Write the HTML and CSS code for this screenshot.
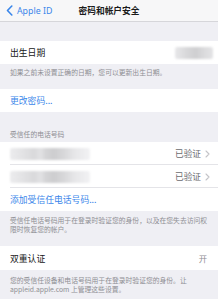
FILE: index.html
```html
<!DOCTYPE html>
<html lang="zh-CN">
<head>
<meta charset="utf-8">
<link rel="stylesheet" href="styles.css">
</head>
<body>
<div class="page">
  <header class="nav">
    <div class="back">
      <svg class="back-icon" width="7" height="11" viewBox="0 0 7 11"><path d="M5.8 1 L1.5 5.5 L5.8 10" fill="none" stroke="#3a86ea" stroke-width="1.6" stroke-linecap="round" stroke-linejoin="round"/></svg>
      <span>Apple ID</span>
    </div>
    <div class="title">密码和帐户安全</div>
    <div></div>
  </header>

  <div class="gap g1"></div>
  <div class="group">
    <div class="row">
      <span class="label">出生日期</span>
      <span class="blur blur-date"></span>
    </div>
  </div>
  <div class="note n1">如果之前未设置正确的日期，您可以更新出生日期。</div>

  <div class="group">
    <div class="row"><span class="link">更改密码...</span></div>
  </div>

  <div class="section-head">受信任的电话号码</div>
  <div class="group">
    <div class="row sep">
      <span class="blur blur-phone"></span>
      <span class="value">已验证<svg class="chev" width="5" height="8" viewBox="0 0 5 8"><path d="M1 1 L4 4 L1 7" fill="none" stroke="#c4c4c8" stroke-width="1.1" stroke-linecap="round" stroke-linejoin="round"/></svg></span>
    </div>
    <div class="row sep">
      <span class="blur blur-phone"></span>
      <span class="value">已验证<svg class="chev" width="5" height="8" viewBox="0 0 5 8"><path d="M1 1 L4 4 L1 7" fill="none" stroke="#c4c4c8" stroke-width="1.1" stroke-linecap="round" stroke-linejoin="round"/></svg></span>
    </div>
    <div class="row"><span class="link">添加受信任电话号码...</span></div>
  </div>
  <div class="note n2">受信任电话号码用于在登录时验证您的身份，以及在您失去访问权限时恢复您的帐户。</div>

  <div class="group">
    <div class="row tall">
      <span class="label">双重认证</span>
      <span class="state">开</span>
    </div>
  </div>
  <div class="note n3">您的受信任设备和电话号码用于在登录时验证您的身份。让<br>appleid.apple.com 上管理这些设置。</div>
</div>
</body>
</html>
```

FILE: styles.css
```css
html, body {
  margin: 0;
  padding: 0;
  background: #efeff4;
}
body {
  font-family: "Noto Sans CJK SC", "Noto Sans", sans-serif;
  color: #111;
}
.page {
  width: 218px;
  height: 299px;
  overflow: hidden;
  background: #efeff4;
}
.nav {
  height: 21px;
  border-bottom: 1px solid #d6d6da;
  background: #f7f7f8;
  display: grid;
  grid-template-columns: 1fr auto 1fr;
  align-items: center;
}
.back {
  display: flex;
  align-items: center;
  gap: 4px;
  padding-left: 6px;
  color: #3a86ea;
  font-size: 8.8px;
  font-family: "Noto Sans", "Noto Sans CJK SC", sans-serif;
}
.back-icon { display: block; }
.title {
  font-size: 8.7px;
  font-weight: 700;
  color: #1a1a1a;
}
.gap.g1 { height: 19px; }
.group {
  background: #fff;
}
.row {
  height: 23px;
  display: flex;
  align-items: center;
  justify-content: space-between;
  padding: 0 10px;
  position: relative;
}
.row.tall { height: 24px; }
.row.sep::after {
  content: "";
  position: absolute;
  left: 10px;
  right: 0;
  bottom: 0;
  height: 1px;
  background: #e4e4e8;
}
.label {
  font-size: 8.8px;
  color: #161616;
}
.link {
  font-size: 8.8px;
  color: #3a86ea;
}
.value {
  font-size: 8.7px;
  color: #6a6a6e;
  display: flex;
  align-items: center;
  gap: 4px;
  margin-right: -2px;
}
.chev { display: block; }
.state {
  font-size: 8.4px;
  color: #8e8e93;
  margin-right: 1px;
}
.blur {
  display: block;
  border-radius: 2px;
  filter: blur(1.2px);
}
.blur-date {
  width: 38px;
  height: 12px;
  margin-right: -5px;
  background: linear-gradient(90deg, #e8e8ea 0%, #d8d8da 30%, #cfcfd1 55%, #dcdcde 80%, #e4e4e6 100%);
}
.blur-phone {
  width: 80px;
  height: 12px;
  background: linear-gradient(90deg, #ececee 0%, #e0e0e2 20%, #d9d9db 30%, #e2e2e4 38%, #d4d4d6 45%, #cdcdcf 55%, #dadadc 70%, #e6e6e8 80%, #f2f2f4 100%);
}
.note {
  font-size: 6.8px;
  line-height: 9px;
  color: #8e8e93;
  padding: 0 10px;
  box-sizing: border-box;
}
.note.n1 { padding-top: 4px; height: 25px; }
.note.n2 { padding-top: 5px; height: 35px; }
.note.n3 { padding-top: 6px; }
.section-head {
  font-size: 6.8px;
  line-height: 9px;
  color: #8e8e93;
  padding: 18px 10px 3px;
}
```
